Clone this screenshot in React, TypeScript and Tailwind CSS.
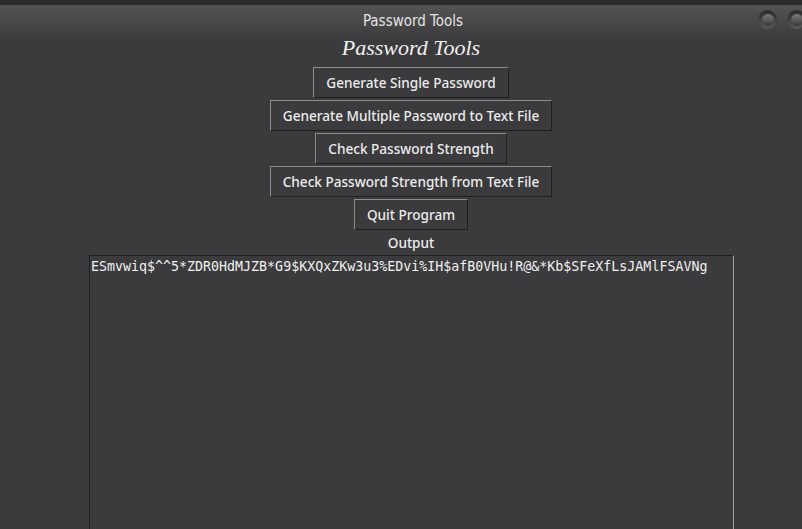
import React from "react";

const btn =
  "h-[31px] px-[12px] bg-[#3b3a3d] text-[#ececec] text-[13.6px] font-medium border border-t-[#8c8c8c] border-l-[#8c8c8c] border-r-[#202020] border-b-[#202020] leading-none";

function WinButton() {
  return (
    <div className="w-[19px] h-[19px] rounded-full bg-gradient-to-b from-[#2a2a2a] to-[#5a5a5a] flex items-center justify-center">
      <div className="w-[12px] h-[12px] rounded-full bg-gradient-to-b from-[#7a7a7a] to-[#3a3a3a]" />
    </div>
  );
}

export default function App() {
  const pw = "ESmvwiq$^^5*ZDR0HdMJZB*G9$KXQxZKw3u3%EDvi%IH$afB0VHu!R@&*Kb$SFeXfLsJAMlFSAVNg";
  return (
    <div className="w-[802px] h-[529px] bg-[#3b3b3d] overflow-hidden flex flex-col" style={{ fontFamily: '"Noto Sans", sans-serif' }}>
      <div className="h-[5px] bg-[#2d2d2d] shrink-0" />
      <div className="h-[33px] shrink-0 bg-gradient-to-b from-[#545454] to-[#3c3c3e] relative flex items-center justify-center">
        <span className="text-[15px] text-[#e4e4e4] font-stretch-condensed -mt-[1px] ml-[24px]" style={{ fontFamily: '"DejaVu Sans", sans-serif' }}>
          Password Tools
        </span>
        <div className="absolute right-[-4px] top-[5px] flex gap-[10px]">
          <WinButton />
          <WinButton />
        </div>
      </div>
      <div className="flex flex-col items-center -mt-[3px] pl-[20px]">
        <div className="text-[22px] italic text-[#f0f0f0] leading-[26px] h-[29px]" style={{ fontFamily: '"Liberation Serif", serif' }}>
          Password Tools
        </div>
        <div className="flex flex-col items-center gap-[2px] mt-[3px]">
          <button className={btn}>Generate Single Password</button>
          <button className={btn}>Generate Multiple Password to Text File</button>
          <button className={btn}>Check Password Strength</button>
          <button className={btn}>Check Password Strength from Text File</button>
          <button className={btn}>Quit Program</button>
        </div>
        <div className="text-[13.6px] font-medium text-[#ececec] mt-[4px] leading-[18px]">Output</div>
      </div>
      <div className="mt-[3px] ml-[89px] w-[645px] flex-1 border-t border-l border-r border-t-[#1f1f1f] border-l-[#1f1f1f] border-r-[#a0a0a0] px-[1px] pt-[3px]">
        <div className="text-[13.3px] text-[#f0f0f0] leading-[16px]" style={{ fontFamily: '"DejaVu Sans Mono", monospace' }}>
          {pw}
        </div>
      </div>
    </div>
  );
}
